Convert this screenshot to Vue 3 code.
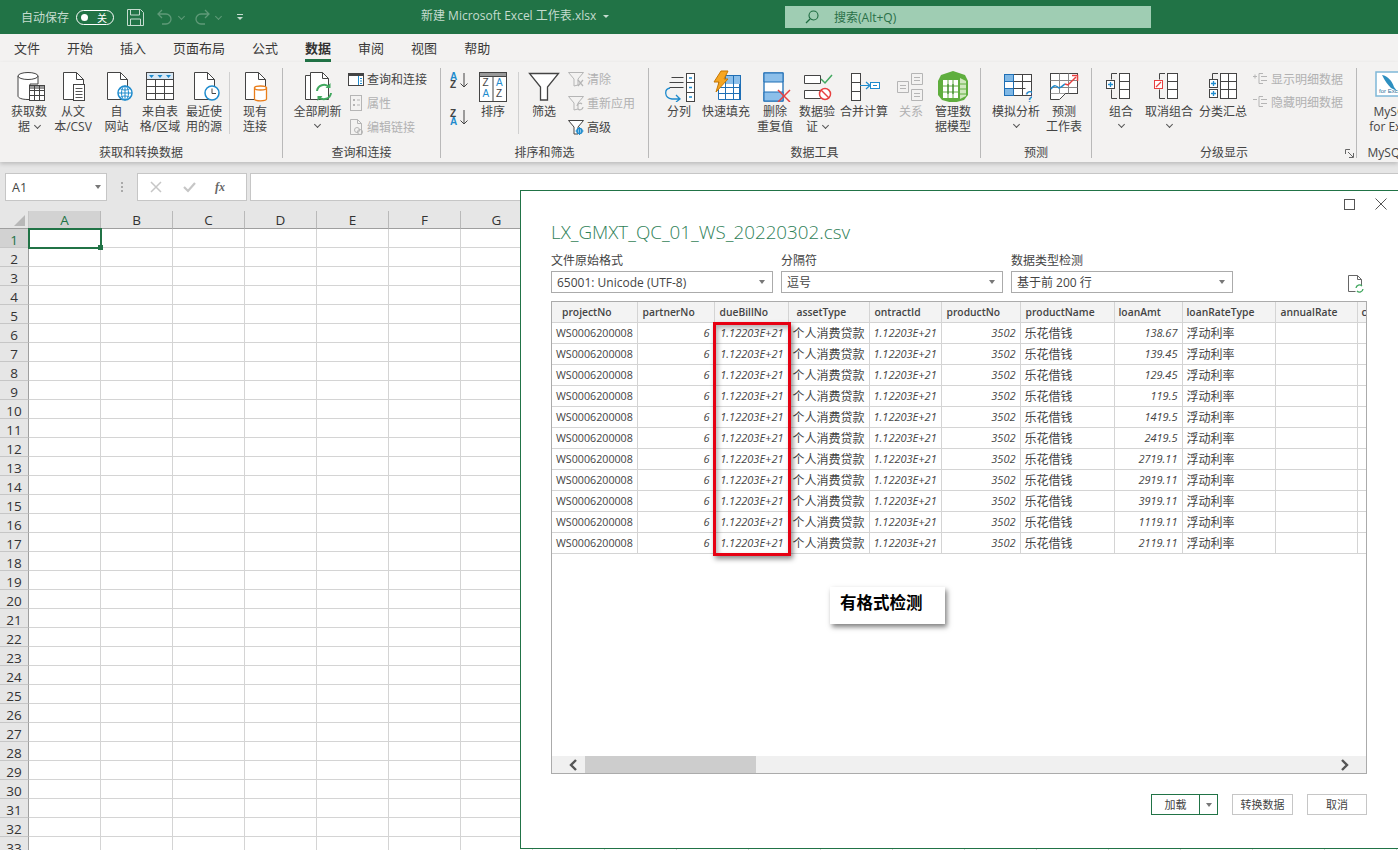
<script setup>
const doc = '<path d="M6.5 2.5h13l7 7v20h-20z" fill="#fff" stroke="#444"/><path d="M19.5 2.5v7h7" fill="none" stroke="#444"/>'
const icons = {
  db: '<path d="M5 6v20c0 2 4 3.5 10 3.5h2V14h8V6z" fill="#fff" stroke="#444"/><ellipse cx="15" cy="6" rx="10" ry="3.5" fill="#fff" stroke="#444"/><rect x="16.5" y="15.5" width="15" height="15" fill="#fff" stroke="#444"/><path d="M17 16h14v3H17z" fill="#999"/><path d="M16.500 20.500h15M16.500 25.500h15M21.500 16v14M26.500 16v14" stroke="#444" fill="none"/>',
  csv: doc + '<rect x="16.500" y="14.500" width="11" height="16" fill="#fff" stroke="#444"/><path d="M18.500 18.500h7M18.500 21.500h7M18.500 24.500h7M18.500 27.500h7" stroke="#555"/>',
  web: doc + '<circle cx="24" cy="23" r="7" fill="#fff" stroke="#1e8bcd" stroke-width="1.500"/><path d="M17 23h14M24 16v14M19 18.500c3 2 7 2 10 0M19 27.500c3-2 7-2 10 0" stroke="#1e8bcd" fill="none"/><ellipse cx="24" cy="23" rx="3.500" ry="7" stroke="#1e8bcd" fill="none"/>',
  table: '<rect x="2.500" y="2.500" width="27" height="27" fill="#fff" stroke="#444"/><path d="M3 3h26v6H3z" fill="#d9e8f5"/><path d="M5 5h5l-2.500 3zM13.500 5h5L16 8zM22 5h5l-2.500 3z" fill="#1e8bcd"/><path d="M2.500 9.500h27M2.500 16.500h27M2.500 23.500h27M11.500 9.500v20M20.500 9.500v20" stroke="#444" fill="none"/>',
  recent: doc + '<circle cx="24" cy="23" r="7" fill="#fff" stroke="#1e8bcd" stroke-width="1.500"/><path d="M24 18.500V23.500h4" stroke="#444" fill="none"/>',
  existing: doc + '<path d="M15.500 18v11c0 1 2.500 1.800 6 1.800s6-.8 6-1.800V18z" fill="#fff" stroke="#e97d1a" stroke-width="1.300"/><ellipse cx="21.500" cy="18" rx="6" ry="2" fill="#fff" stroke="#e97d1a" stroke-width="1.300"/>',
  refresh: '<path d="M3.500 5.500h10v24h-10z" fill="#fff" stroke="#444"/><path d="M8.500 2.500h12l6 6v21h-18z" fill="#fff" stroke="#444"/><path d="M20.500 2.500v6h6" fill="none" stroke="#444"/><path d="M15 21a7 7 0 0 1 12-4M29 23a7 7 0 0 1-12 4" fill="none" stroke="#41a85f" stroke-width="2"/><path d="M28.500 13v5h-5zM15.500 31v-5h5z" fill="#41a85f"/>',
  sort: '<rect x="2.500" y="2.500" width="27" height="29" fill="#fff" stroke="#444"/><path d="M3 3h26v3H3z" fill="#999"/><path d="M16 6v25M2.500 6.500h27" stroke="#444"/><g font-family="Liberation Sans" font-size="10"><text x="5.500" y="16" fill="#444">Z</text><text x="5.500" y="27" fill="#1e8bcd">A</text><text x="19" y="16" fill="#1e8bcd">A</text><text x="19" y="27" fill="#444">Z</text></g>',
  funnel: '<path d="M1.500 3.500h29L19.500 17v13h-7V17z" fill="#fff" stroke="#444" stroke-width="1.300"/>',
  split: '<path d="M8.500 7.500h12M6.500 12.500h14M6.500 17.500h14" stroke="#444"/><rect x="23.500" y="3.500" width="8" height="28" fill="#fff" stroke="#444"/><path d="M23.500 12.500h8M23.500 22.500h8" stroke="#444"/><path d="M26 8h3M26 17.500h3M26 27h3" stroke="#1e8bcd" stroke-width="1.500"/><path d="M7 18c-6 1-6 10 2 11h7M13 25l4 4-4 3" fill="none" stroke="#1e8bcd" stroke-width="1.300"/>',
  flash: '<path d="M8.500 11.500h21v18h-21z" fill="#fff" stroke="#1f6fb5"/><path d="M15 6h15v8H15z" fill="#8cbfea"/><rect x="15.500" y="5.500" width="15" height="24" fill="none" stroke="#1f6fb5"/><path d="M8.500 17.500h22M8.500 23.500h22M23.500 5.500v24" stroke="#1f6fb5"/><path d="M11 1h7l-4 8h4L6 22l3-10H4z" fill="#f5a623" stroke="#c77700"/>',
  dedupe: '<rect x="5" y="3" width="19" height="28" fill="#fff" stroke="#1f6fb5" stroke-width="1.300"/><path d="M5 3h19v9H5zM5 22h19v9H5z" fill="#8cbfea" stroke="#1f6fb5"/><path d="M19 20l12 12M31 20L19 32" stroke="#e84040" stroke-width="1.500"/>',
  validate: '<path d="M3.500 5.500h16v8h-16zM3.500 20.500h16v8h-16z" fill="#fff" stroke="#444"/><path d="M20 9l4 4 7-8" fill="none" stroke="#41a85f" stroke-width="1.500"/><circle cx="24" cy="24" r="5.500" fill="#fff" stroke="#e84040" stroke-width="1.500"/><path d="M20 20l8 8" stroke="#e84040" stroke-width="1.500"/>',
  merge: '<rect x="3.500" y="3.500" width="9" height="27" fill="#fff" stroke="#444"/><path d="M3.500 12.500h9M3.500 21.500h9" stroke="#444"/><path d="M12 15.500h9M18 12l4 3.500-4 3.500" fill="none" stroke="#1e8bcd" stroke-width="1.200"/><rect x="22.500" y="12.500" width="9" height="6" fill="#fff" stroke="#1e8bcd"/><path d="M25 15.500h4" stroke="#1e8bcd"/>',
  relation: '<path d="M16.500 3.500h11v11h-11zM16.500 19.500h11v11h-11zM2.500 11.500h11v11h-11z" fill="#f3f2f1" stroke="#b5b5b5"/><path d="M19 7.500h6M19 10.500h6M19 23.500h6M19 26.500h6M5 15.500h6M5 18.500h6" stroke="#b5b5b5"/>',
  model: '<path d="M16 1l12 4 3 6v14l-4 5-11 3-11-3-4-5V11l3-6z" fill="#5fae3e"/><path d="M6 10h15v18H6z" fill="#fff"/><path d="M23 8l6 3v15l-6 3z" fill="#cfe7bd"/><path d="M6 16h15M6 22h15M11 10v18M16 10v18" stroke="#5fae3e" fill="none"/><path d="M11 14v10M16 14v10" stroke="#2d7a1f"/><path d="M23 14h6M23 19h6M23 24h6" stroke="#5fae3e"/>',
  whatif: '<rect x="4.500" y="4.500" width="27" height="21" fill="#fff" stroke="#444"/><path d="M5 5h9v7H5zM5 19h9v6H5z" fill="#7fb8e6"/><rect x="4.500" y="4.500" width="9" height="21" fill="none" stroke="#1f6fb5"/><path d="M4.500 11.500h9M4.500 18.500h9" stroke="#1f6fb5"/><path d="M13.500 11.500h18M13.500 18.500h12M22.500 4.500v21" stroke="#444"/><text x="25" y="33" font-size="17" font-family="Liberation Sans" fill="#1e8bcd">?</text>',
  forecast: '<rect x="2.500" y="3.500" width="27" height="20" fill="#fff" stroke="#444"/><path d="M2.500 10.500h27M2.500 17.500h27M11.500 3.500v20M20.500 3.500v20" stroke="#888"/><path d="M2.500 23.500v6h9l6-6" fill="#fff" stroke="#444"/><path d="M3 19c3-5 6-3 8-1 3-1 4-3 6-4" fill="none" stroke="#1e8bcd" stroke-width="1.500"/><path d="M17 14l3 1 8-8" fill="none" stroke="#e84040" stroke-width="1.500"/><path d="M24 5.500h5.500V11" fill="none" stroke="#e84040" stroke-width="1.500"/>',
  group: '<path d="M12 3.500H6.500v6M6.500 19.500v9H12" fill="none" stroke="#444"/><rect x="14.500" y="3.500" width="10" height="25" fill="#fff" stroke="#444"/><path d="M14.500 11.500h10M14.500 19.500h10" stroke="#444"/><rect x="1.500" y="10.500" width="8" height="8" fill="#fff" stroke="#444"/><path d="M3 14.500h5M5.500 12v5" stroke="#1e8bcd" stroke-width="1.300"/>',
  ungroup: '<path d="M12 3.500H6.500v6M6.500 19.500v9H12" fill="none" stroke="#444"/><rect x="14.500" y="3.500" width="10" height="25" fill="#fff" stroke="#444"/><path d="M14.500 11.500h10M14.500 19.500h10" stroke="#444"/><rect x="1.500" y="10.500" width="8" height="8" fill="#fff" stroke="#e84040"/><path d="M3 17l5-5" stroke="#e84040" stroke-width="1.300"/>',
  subtotal: '<path d="M11 3.500H5.500v6M5.500 22.500v5" fill="none" stroke="#444"/><rect x="13.500" y="3.500" width="16" height="25" fill="#fff" stroke="#444"/><path d="M13.500 11.500h16M13.500 19.500h16M21.500 3.500v25" stroke="#444"/><rect x="2.500" y="9.500" width="8" height="8" fill="#fff" stroke="#444"/><rect x="2.500" y="19.500" width="8" height="8" fill="#fff" stroke="#444"/><path d="M4 13.500h5M6.500 11v5M4 23.500h5M6.500 21v5" stroke="#1e8bcd" stroke-width="1.300"/>',
  mysql: '<rect x="5" y="2" width="26" height="24" fill="#fff" stroke="#7fb8d8" stroke-width="1.500"/><path d="M11 5c6 1 10 6 12 12l3 4-6-3c-3-3-6-7-9-13z" fill="#2d8fc0"/><text x="8" y="23" font-size="6" font-family="Liberation Sans" fill="#2d6f98">for Excel</text>',
  query: '<rect x=".5" y="2.500" width="15" height="12" fill="#fff" stroke="#444"/><path d="M1 3h14v2H1z" fill="#444"/><path d="M10.500 5v9" stroke="#1e8bcd"/><path d="M12 7.500h2M12 10h2M12 12.500h2" stroke="#1e8bcd"/>',
  props: '<rect x="2.500" y=".5" width="11" height="15" fill="#f3f2f1" stroke="#b5b5b5"/><path d="M5 4h2v2H5zM5 9h2v2H5z" fill="#b5b5b5"/><path d="M9 5h3M9 10h3" stroke="#b5b5b5"/>',
  links: '<path d="M2.500.5h7l4 4v11h-11z" fill="#f3f2f1" stroke="#b5b5b5"/><path d="M9.500.5v4h4" fill="none" stroke="#b5b5b5"/><circle cx="9" cy="11" r="2.500" fill="none" stroke="#b5b5b5"/><circle cx="12" cy="13" r="2.500" fill="none" stroke="#b5b5b5"/>',
  clear: '<path d="M.5 1.500h15L10 8v6l-4 1V8z" fill="#f3f2f1" stroke="#b5b5b5"/><path d="M10 9l5 6M15 9l-5 6" stroke="#b5b5b5" stroke-width="1.200"/>',
  reapply: '<path d="M.5 1.500h15L10 8v6l-4 1V8z" fill="#f3f2f1" stroke="#b5b5b5"/><path d="M9 11a3 3 0 0 1 5-2M15 12a3 3 0 0 1-5 2" fill="none" stroke="#b5b5b5" stroke-width="1.200"/>',
  advanced: '<path d="M.5 1.500h15L10 8v7H6V8z" fill="#fff" stroke="#444"/><circle cx="11.500" cy="12" r="2.500" fill="#fff" stroke="#1e8bcd" stroke-width="1.500"/><path d="M11.500 8v8M7.500 12h8" stroke="#1e8bcd"/>',
  show: '<path d="M0 5.500h4M2 3.500v4" stroke="#b5b5b5"/><path d="M6 2.500h4M6 12.500h4M8 5.500h6M8 9.500h6M6 2.500v10" stroke="#b5b5b5" fill="none"/>',
  hide: '<path d="M0 5.500h4" stroke="#b5b5b5"/><path d="M6 2.500h4M6 12.500h4M8 5.500h6M8 9.500h6M6 2.500v10" stroke="#b5b5b5" fill="none"/>',
}

const big = (icon, w, lines, caret = false, off = false) => ({ kind: 'big', icon, w, lines, caret, off })
const small = (w, items, gap = 3, h = 24) => ({ kind: 'small', w, items, gap, h })
const sep = () => ({ kind: 'sep' })
const az = () => ({ kind: 'az' })

const groups = [
  { title: '获取和转换数据', w: 283, pad: 7, items: [
    big('db', 44, ['获取数', '据'], 'inline'), big('csv', 44, ['从文', '本/CSV']), big('web', 43, ['自', '网站']),
    big('table', 44, ['来自表', '格/区域']), big('recent', 44, ['最近使', '用的源']), sep(), big('existing', 44, ['现有', '连接']),
  ] },
  { title: '查询和连接', w: 158, pad: 6, items: [
    big('refresh', 57, ['全部刷新'], 'below'),
    small(90, [{ icon: 'query', t: '查询和连接' }, { icon: 'props', t: '属性', off: true }, { icon: 'links', t: '编辑链接', off: true }]),
  ] },
  { title: '排序和筛选', w: 208, pad: 9, items: [
    az(), big('sort', 44, ['排序']), sep(), big('funnel', 44, ['筛选']),
    small(70, [{ icon: 'clear', t: '清除', off: true }, { icon: 'reapply', t: '重新应用', off: true }, { icon: 'advanced', t: '高级' }]),
  ] },
  { title: '数据工具', w: 332, pad: 10, items: [
    big('split', 40, ['分列']), big('flash', 54, ['快速填充']), big('dedupe', 44, ['删除', '重复值']), big('validate', 40, ['数据验', '证'], 'inline'),
    big('merge', 54, ['合并计算']), big('relation', 40, ['关系'], false, true), big('model', 44, ['管理数', '据模型']),
  ] },
  { title: '预测', w: 111, pad: 9, items: [big('whatif', 52, ['模拟分析'], 'below'), big('forecast', 44, ['预测', '工作表'])] },
  { title: '分级显示', w: 265, pad: 7, launcher: true, items: [
    big('group', 44, ['组合'], 'below'), big('ungroup', 52, ['取消组合'], 'below'), big('subtotal', 56, ['分类汇总']),
    small(100, [{ icon: 'show', t: '显示明细数据', off: true }, { icon: 'hide', t: '隐藏明细数据', off: true }], 2, 23),
  ] },
  { title: 'MySQL', w: 60, pad: 6, items: [big('mysql', 60, ['MySQL', 'for Excel'])] },
]

const tabs = ['文件', '开始', '插入', '页面布局', '公式', '数据', '审阅', '视图', '帮助']
// only A-G are visible, the rest of the header sits behind the dialog
const letters = ['A', 'B', 'C', 'D', 'E', 'F', 'G', ...Array(12).fill('')]
const rowNums = Array.from({ length: 33 }, (_, i) => i + 1)

const cols = [
  { name: 'projectNo', w: 85, pad: 10 }, { name: 'partnerNo', w: 77, pad: 5 }, { name: 'dueBillNo', w: 74, pad: 5 },
  { name: 'assetType', w: 81, pad: 8 }, { name: 'ontractId', w: 72, pad: 5 }, { name: 'productNo', w: 79, pad: 5 },
  { name: 'productName', w: 94, pad: 5 }, { name: 'loanAmt', w: 68, pad: 4 }, { name: 'loanRateType', w: 93, pad: 4 },
  { name: 'annualRate', w: 82, pad: 5 }, { name: 'c', w: 30, pad: 4 },
]
const amounts = ['138.67', '139.45', '129.45', '119.5', '1419.5', '2419.5', '2719.11', '2919.11', '3919.11', '1119.11', '2119.11']
</script>

<template>
  <div class="app">
    <header class="titlebar">
      <div class="qat">
        <span class="autosave">自动保存</span>
        <span class="toggle"><i></i><b>关</b></span>
        <svg class="qat-save" width="17" height="17" viewBox="0 0 17 17"><path d="M.5.500h13l3 3v13H.5z" fill="none" stroke="#c5dccf"/><path d="M3.500 1v5h9V1M3.500 16v-6h10v6" fill="none" stroke="#c5dccf"/></svg>
        <svg class="qat-undo" width="16" height="16" viewBox="0 0 16 16"><path d="M5 1L1 5l4 4M1 5h8a5 5 0 0 1 0 10H5" fill="none" stroke="#5f9a78" stroke-width="1.300"/></svg>
        <span class="mini-caret"></span>
        <svg class="qat-redo" width="16" height="16" viewBox="0 0 16 16"><path d="M11 1l4 4-4 4M15 5H7a5 5 0 0 0 0 10h4" fill="none" stroke="#5f9a78" stroke-width="1.300"/></svg>
        <span class="mini-caret"></span>
        <svg class="qat-more" width="8" height="8" viewBox="0 0 8 8"><path d="M1 1.500h6" stroke="#c5dccf"/><path d="M1 4l3 3 3-3z" fill="#c5dccf"/></svg>
      </div>
      <div class="doc-title">新建 Microsoft Excel 工作表.xlsx<span class="title-caret"></span></div>
      <div class="search">
        <svg width="14" height="14" viewBox="0 0 14 14"><circle cx="8.500" cy="5.500" r="4.500" fill="none" stroke="#1d6b40" stroke-width="1.100"/><path d="M5 9l-4 4" stroke="#1d6b40" stroke-width="1.200"/></svg>
        <span>搜索(Alt+Q)</span>
      </div>
    </header>

    <nav class="tabs">
      <span v-for="tab in tabs" :key="tab" class="tab" :class="{ active: tab === '数据' }">{{ tab }}</span>
    </nav>

    <section class="ribbon">
      <div v-for="g in groups" :key="g.title" class="rgroup" :style="{ width: `${g.w}px`, paddingLeft: `${g.pad}px` }">
        <div class="rbody">
          <template v-for="(item, i) in g.items" :key="i">
            <div v-if="item.kind === 'big'" class="bigbtn" :class="{ off: item.off }" :style="{ width: `${item.w}px` }">
              <svg class="bigicon" :width="item.icon === 'mysql' ? 44 : 32" height="32" :viewBox="item.icon === 'mysql' ? '0 0 44 32' : '0 0 32 32'" v-html="icons[item.icon]"></svg>
              <span v-for="(line, n) in item.lines" :key="n" class="bigline">{{ line }}<i v-if="item.caret === 'inline' && n === 1" class="chev"></i></span>
              <i v-if="item.caret === 'below'" class="chev below"></i>
            </div>
            <div v-else-if="item.kind === 'small'" class="smallcol" :style="{ width: `${item.w}px` }">
              <div v-for="row in item.items" :key="row.t" class="smallbtn" :class="{ off: row.off }" :style="{ gap: `${item.gap}px`, height: `${item.h}px` }">
                <svg width="16" height="16" viewBox="0 0 16 16" v-html="icons[row.icon]"></svg>
                <span>{{ row.t }}</span>
              </div>
            </div>
            <div v-else-if="item.kind === 'az'" class="azcol">
              <div class="azbtn"><span class="azpair"><b>A</b><em>Z</em></span><svg width="8" height="15" viewBox="0 0 8 15"><path d="M4 0v14M.5 10.500L4 14l3.500-3.500" fill="none" stroke="#444"/></svg></div>
              <div class="azbtn"><span class="azpair"><em>Z</em><b>A</b></span><svg width="8" height="15" viewBox="0 0 8 15"><path d="M4 0v14M.5 10.500L4 14l3.500-3.500" fill="none" stroke="#444"/></svg></div>
            </div>
            <div v-else class="rsep"></div>
          </template>
        </div>
        <div class="rtitle" :style="{ marginLeft: `-${g.pad}px` }">{{ g.title }}</div>
        <svg v-if="g.launcher" class="launcher" width="9" height="9" viewBox="0 0 9 9"><path d="M.5 5V.5H5M3 3l5 5M8.500 4v4.500H4" fill="none" stroke="#666"/></svg>
      </div>
    </section>

    <div class="formula">
      <div class="namebox"><span>A1</span><i class="tri"></i></div>
      <span class="dots"></span>
      <div class="fxbox">
        <svg width="12" height="12" viewBox="0 0 12 12"><path d="M1 1l10 10M11 1L1 11" stroke="#c6c6c6" stroke-width="1.500"/></svg>
        <svg width="13" height="12" viewBox="0 0 13 12"><path d="M1 6l4 4 7-8" fill="none" stroke="#c6c6c6" stroke-width="2.200"/></svg>
        <em>fx</em>
      </div>
      <div class="fxinput"></div>
    </div>

    <section class="sheet">
      <div class="colhead">
        <div class="corner"><i></i></div>
        <div v-for="(c, i) in letters" :key="i" class="colcell" :class="{ on: c === 'A' }">{{ c }}</div>
      </div>
      <div v-for="r in rowNums" :key="r" class="srow">
        <div class="rowcell" :class="{ on: r === 1 }">{{ r }}</div>
        <div v-for="(c, i) in letters" :key="i" class="cell"></div>
      </div>
      <div class="cursor"><i></i></div>
    </section>

    <div class="dialog">
      <div class="winbtns">
        <svg width="11" height="11" viewBox="0 0 11 11"><rect x=".5" y=".5" width="10" height="10" fill="none" stroke="#555"/></svg>
        <svg width="12" height="12" viewBox="0 0 12 12"><path d="M.5.500l11 11M11.500.500l-11 11" stroke="#555"/></svg>
      </div>
      <h1>LX_GMXT_QC_01_WS_20220302.csv</h1>
      <div class="fields">
        <label class="field"><span>文件原始格式</span><div class="select">65001: Unicode (UTF-8)<i class="tri"></i></div></label>
        <label class="field"><span>分隔符</span><div class="select">逗号<i class="tri"></i></div></label>
        <label class="field"><span>数据类型检测</span><div class="select">基于前 200 行<i class="tri"></i></div></label>
        <svg class="reload" width="16" height="18" viewBox="0 0 16 18"><path d="M.5.500h9l4 4v6M9.500.500v4h4M.5.500v16h7" fill="none" stroke="#666"/><path d="M8 13a3.500 3.500 0 0 1 6-2M15 14a3.500 3.500 0 0 1-6 2" fill="none" stroke="#41a85f" stroke-width="1.300"/></svg>
      </div>
      <div class="preview">
        <table>
          <colgroup><col v-for="c in cols" :key="c.name" :style="{ width: `${c.w}px` }"></colgroup>
          <thead>
            <tr><th v-for="c in cols" :key="c.name" :style="{ paddingLeft: `${c.pad}px` }">{{ c.name }}</th></tr>
          </thead>
          <tbody>
            <tr v-for="amt in amounts" :key="amt">
              <td>WS0006200008</td>
              <td class="num">6</td>
              <td class="num">1.12203E+21</td>
              <td class="cjk">个人消费贷款</td>
              <td class="num">1.12203E+21</td>
              <td class="num">3502</td>
              <td class="cjk">乐花借钱</td>
              <td class="num">{{ amt }}</td>
              <td class="cjk">浮动利率</td>
              <td></td>
              <td></td>
            </tr>
          </tbody>
        </table>
        <div class="hscroll">
          <svg width="10" height="12" viewBox="0 0 10 12"><path d="M8 1L3 6l5 5" fill="none" stroke="#555" stroke-width="2.400"/></svg>
          <div class="track"><div class="thumb"></div></div>
          <svg width="10" height="12" viewBox="0 0 10 12"><path d="M2 1l5 5-5 5" fill="none" stroke="#555" stroke-width="2.400"/></svg>
        </div>
      </div>
      <div class="actions">
        <div class="btn primary"><span>加载</span><i><b class="tri"></b></i></div>
        <div class="btn">转换数据</div>
        <div class="btn">取消</div>
      </div>
      <div class="redbox"></div>
      <div class="note">有格式检测</div>
    </div>
  </div>
</template>

<style>
html, body { margin: 0; overflow: hidden; }
</style>

<style scoped>
.app {
  position: relative;
  width: 1398px;
  height: 850px;
  overflow: hidden;
  background: #fff;
  font-family: "Open Sans", "Noto Sans CJK SC", sans-serif;
  font-size: 12px;
  color: #444;
}

.titlebar {
  height: 34px;
  background: #217346;
  display: flex;
  align-items: center;
  position: relative;
}
.qat { display: flex; align-items: center; padding-left: 21px; }
.autosave { color: #c5dccf; width: 55px; }
.toggle {
  width: 38px; height: 15px;
  box-sizing: border-box;
  border: 1px solid #fff;
  border-radius: 8px;
  display: flex; align-items: center;
  padding: 0 6px 0 4px;
  justify-content: space-between;
}
.toggle i { width: 7px; height: 7px; border-radius: 50%; background: #fff; }
.toggle b { color: #fff; font-weight: 400; font-size: 10px; }
.qat-save { margin-left: 13px; }
.qat-undo { margin-left: 13px; }
.qat-redo { margin-left: 10px; }
.qat-more { margin-left: 15px; }
.mini-caret {
  width: 4px; height: 4px; margin: 0 0 2px 6px;
  border-right: 1px solid #5f9a78; border-bottom: 1px solid #5f9a78;
  transform: rotate(45deg);
}
.doc-title {
  position: absolute; left: 421px; top: 6px;
  color: #c5dccf; font-size: 12px; white-space: nowrap;
}
.title-caret {
  display: inline-block; margin-left: 7px; vertical-align: 2px;
  border: 3px solid transparent; border-top-color: #c5dccf; border-bottom-width: 0;
}
.search {
  position: absolute; left: 785px; top: 6px;
  width: 366px; height: 22px;
  background: #9fcdb3;
  display: flex; align-items: center; gap: 15px;
  padding-left: 20px;
  box-sizing: border-box;
  color: #2a7048;
}

.tabs {
  height: 28px;
  background: #f3f2f1;
  display: flex;
  gap: 27px;
  padding-left: 14px;
  font-size: 13px;
  line-height: 29px;
  color: #3b3a39;
}
.tab { position: relative; height: 28px; }
.tab.active { font-weight: 700; color: #333; }
.tab.active::after {
  content: ""; position: absolute; left: 0; right: 0; bottom: 0;
  height: 3px; background: #217346;
}

.ribbon {
  height: 100px;
  background: #f3f2f1;
  display: flex;
  box-shadow: 0 2px 4px rgba(0, 0, 0, .18);
  position: relative;
  z-index: 1;
}
.rgroup {
  box-sizing: border-box;
  flex: none;
  height: 90px;
  margin-top: 6px;
  border-right: 1px solid #b9b9b9;
  position: relative;
  display: flex;
  flex-direction: column;
}
.rgroup:last-child { border-right: 0; }
.rbody { height: 77px; flex: none; display: flex; }
.rtitle { text-align: center; line-height: 16px; color: #444; white-space: nowrap; }
.launcher { position: absolute; right: 2px; bottom: 0; }
.bigbtn {
  flex: none;
  display: flex; flex-direction: column; align-items: center;
  white-space: nowrap;
  line-height: 15px;
}
.bigbtn.off { color: #b1b1b1; }
.bigicon { margin: 2px 0 2px; flex: none; }
.bigline { display: block; }
.chev {
  display: inline-block;
  width: 4px; height: 4px;
  border-right: 1px solid #555; border-bottom: 1px solid #555;
  transform: rotate(45deg);
  margin: 0 0 3px 5px;
}
.chev.below { margin: 3px 0 0; }
.rsep { flex: none; width: 1px; height: 62px; margin: 4px 3px 0; background: #d0d0d0; }
.smallcol { flex: none; padding-left: 2px; box-sizing: border-box; margin-top: -1px; }
.smallbtn { display: flex; align-items: center; white-space: nowrap; color: #444; }
.smallbtn svg { flex: none; }
.smallbtn.off { color: #b1b1b1; }
.azcol { flex: none; width: 21px; padding-top: 5px; }
.azbtn { height: 37px; display: flex; align-items: flex-start; gap: 1px; }
.azpair { display: flex; flex-direction: column; font: 700 10px/8px "Liberation Sans", sans-serif; width: 9px; }
.azpair b { color: #1e8bcd; font-weight: 700; }
.azpair em { color: #444; font-style: normal; }

.formula {
  height: 49px;
  background: #e6e6e6;
  display: flex;
  align-items: flex-start;
  padding: 11px 0 0 5px;
  box-sizing: border-box;
}
.namebox {
  width: 102px; height: 28px;
  box-sizing: border-box;
  background: #fff;
  border: 1px solid #c6c6c6;
  display: flex; align-items: center; justify-content: space-between;
  padding: 0 5px 0 6px;
  font-size: 12.500px;
}
.dots {
  width: 2px; height: 10px; margin: 9px 14px 0 14px;
  background: repeating-linear-gradient(#aaa 0 2px, transparent 2px 4px);
}
.fxbox {
  width: 110px; height: 28px;
  box-sizing: border-box;
  background: #fff;
  border: 1px solid #c6c6c6;
  display: flex; align-items: center; gap: 21px;
  padding-left: 12px;
}
.fxbox em { font: italic 700 12px "Liberation Serif", serif; color: #666; margin-left: -2px; }
.fxinput {
  flex: 1; height: 28px; margin-left: 3px;
  box-sizing: border-box;
  background: #fff;
  border: 1px solid #c6c6c6;
  border-right: 0;
}
.tri {
  display: inline-block;
  border: 3.500px solid transparent; border-top: 4px solid #777; border-bottom: 0;
}

.sheet { position: relative; }
.colhead, .srow { display: flex; }
.colhead { height: 18px; background: #e6e6e6; }
.corner {
  width: 29px; flex: none; box-sizing: border-box;
  border-bottom: 1px solid #9f9f9f;
  border-right: 1px solid #c6c6c6;
  position: relative;
}
.corner i {
  position: absolute; right: 3px; bottom: 2px;
  border-style: solid; border-width: 0 0 11px 11px;
  border-color: transparent transparent #b8b8b8 transparent;
}
.colcell {
  width: 72px; flex: none; box-sizing: border-box;
  text-align: center;
  line-height: 17px;
  padding-top: 1px;
  font-size: 13.500px;
  border-right: 1px solid #b9b9b9;
  border-bottom: 1px solid #9f9f9f;
  color: #333;
}
.colcell.on { background: #d2d2d2; color: #217346; }
.srow { height: 19px; }
.rowcell {
  width: 29px; flex: none; box-sizing: border-box;
  background: #e6e6e6;
  text-align: center;
  line-height: 17px;
  padding-top: 3px;
  font-size: 13.500px;
  border-right: 1px solid #9f9f9f;
  border-bottom: 1px solid #c6c6c6;
  color: #333;
}
.rowcell.on { background: #d2d2d2; color: #217346; }
.cell {
  width: 72px; flex: none; box-sizing: border-box;
  border-right: 1px solid #d4d4d4;
  border-bottom: 1px solid #d4d4d4;
}
.cursor {
  position: absolute; left: 28px; top: 17px;
  width: 74px; height: 21px;
  box-sizing: border-box;
  border: 2px solid #217346;
}
.cursor i {
  position: absolute; right: -3px; bottom: -3px;
  width: 5px; height: 5px;
  background: #217346;
}

.dialog {
  position: absolute; left: 520px; top: 190px;
  width: 880px; height: 659px;
  box-sizing: border-box;
  background: #fff;
  border: 1px solid #217346;
  padding: 0 0 0 30px;
  z-index: 2;
}
.winbtns {
  position: absolute; top: 7px; right: 12px;
  display: flex; gap: 20px; align-items: center;
}
.dialog h1 {
  margin: 0; padding-top: 29px;
  font-size: 18.800px; line-height: 24px; font-weight: 300;
  color: #2f8158;
}
.fields { display: flex; gap: 8px; margin-top: 9px; position: relative; }
.field { display: block; width: 222px; }
.field > span { display: block; line-height: 16px; color: #444; }
.select {
  height: 22px;
  box-sizing: border-box;
  border: 1px solid #ababab;
  display: flex; align-items: center; justify-content: space-between;
  padding: 0 7px 0 5px;
  margin-top: 2px;
}
.reload { position: absolute; left: 797px; top: 22px; }
.preview {
  width: 816px; height: 473px;
  box-sizing: border-box;
  margin-top: 8px;
  border: 1px solid #ababab;
  position: relative;
  overflow: hidden;
}
.preview table {
  border-collapse: collapse;
  table-layout: fixed;
  width: 835px;
  font-size: 10.700px;
}
.preview th {
  height: 20px; padding: 0 0 0 4px;
  box-sizing: border-box;
  text-align: left;
  background: #f3f3f3;
  border: 1px solid #d4d4d4;
  border-top: 0;
  font-size: 10.300px;
  font-weight: 600;
  color: #444;
  white-space: nowrap;
}
.preview th:first-child, .preview td:first-child { border-left: 0; }
.preview td {
  height: 21px; padding: 0 4px;
  box-sizing: border-box;
  border: 1px solid #d4d4d4;
  white-space: nowrap;
  color: #444;
}
.preview td.num { text-align: right; font-style: italic; font-size: 11px; }
.preview td.cjk { font-size: 12px; padding: 0 0 0 4px; }
.hscroll {
  position: absolute; left: 0; right: 0; bottom: 0;
  height: 17px;
  background: #f0f0f0;
  display: flex; align-items: center;
  padding: 0 16px;
  box-sizing: border-box;
  gap: 7px;
}
.track { flex: 1; height: 17px; }
.thumb { width: 171px; height: 17px; background: #cdcdcd; }
.actions { display: flex; justify-content: flex-end; gap: 14px; margin: 20px 32px 0 0; }
.btn {
  width: 60px; height: 21px;
  box-sizing: border-box;
  border: 1px solid #c6c6c6;
  text-align: center;
  line-height: 19px;
  font-size: 11px;
  color: #444;
}
.btn:nth-child(2) { width: 61px; }
.btn.primary {
  width: 67px;
  border-color: #217346;
  display: flex;
}
.btn.primary span { flex: 1; border-right: 1px solid #217346; }
.btn.primary i { width: 17px; display: flex; align-items: center; justify-content: center; }
.redbox {
  position: absolute; left: 192px; top: 131px;
  width: 78px; height: 234px;
  box-sizing: border-box;
  border: 3px solid #e60012;
  box-shadow: 2px 3px 5px rgba(0, 0, 0, .45), inset 2px 3px 5px rgba(0, 0, 0, .3);
}
.note {
  position: absolute; left: 309px; top: 396px;
  width: 115px; height: 37px;
  box-sizing: border-box;
  padding-left: 10px;
  background: #fff;
  box-shadow: 2px 3px 5px rgba(0, 0, 0, .5);
  font: 700 16.500px/31px "Noto Sans CJK SC", sans-serif;
  color: #000;
}
</style>
